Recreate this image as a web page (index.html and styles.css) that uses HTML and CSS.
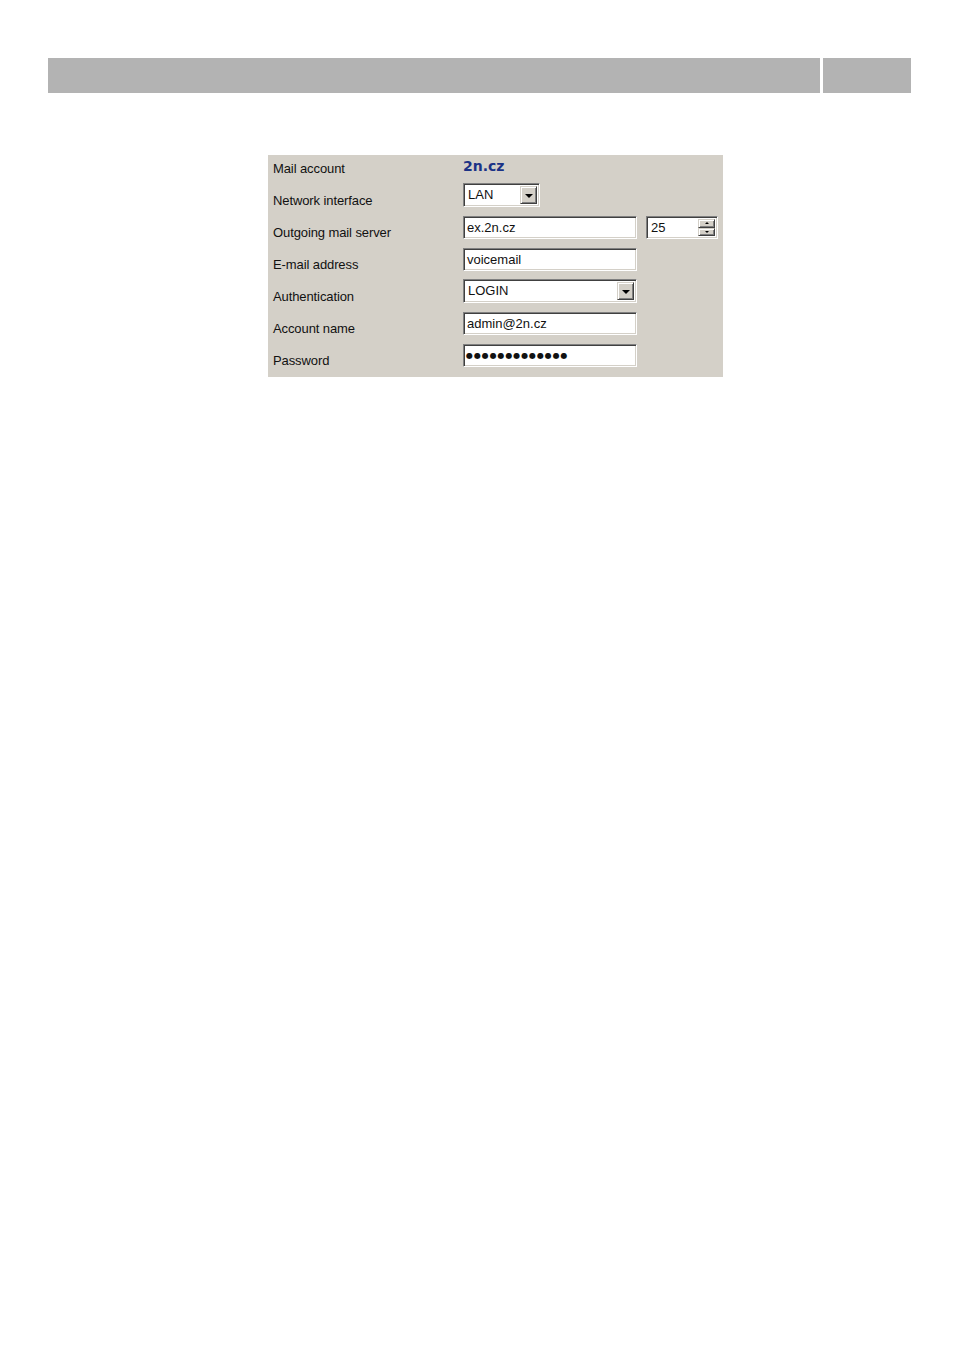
FILE: index.html
```html
<!DOCTYPE html>
<html>
<head>
<meta charset="utf-8">
<link rel="stylesheet" href="styles.css">
</head>
<body>
<div class="header">
  <div class="bar bar-main"></div>
  <div class="bar bar-side"></div>
</div>

<div class="panel">
  <div class="row row-first">
    <div class="label">Mail account</div>
    <div class="account">2n.cz</div>
  </div>
  <div class="row">
    <div class="label">Network interface</div>
    <div class="select select-short"><span class="val">LAN</span><span class="drop"><span class="tri"></span></span></div>
  </div>
  <div class="row">
    <div class="label">Outgoing mail server</div>
    <div class="field">ex.2n.cz</div>
    <div class="spin"><span class="val">25</span><span class="spinbtns"><span class="sbtn"><span class="tri-up"></span></span><span class="sbtn"><span class="tri-down"></span></span></span></div>
  </div>
  <div class="row">
    <div class="label">E-mail address</div>
    <div class="field">voicemail</div>
  </div>
  <div class="row">
    <div class="label">Authentication</div>
    <div class="select select-long"><span class="val">LOGIN</span><span class="drop"><span class="tri"></span></span></div>
  </div>
  <div class="row">
    <div class="label">Account name</div>
    <div class="field">admin@2n.cz</div>
  </div>
  <div class="row">
    <div class="label">Password</div>
    <div class="field pwd">●●●●●●●●●●●●●</div>
  </div>
</div>
</body>
</html>
```

FILE: styles.css
```css
html, body {
  margin: 0;
  padding: 0;
  background: #ffffff;
}

body {
  font-family: "Liberation Sans", Arial, sans-serif;
  color: #111111;
}

.header {
  display: flex;
  gap: 3px;
  padding-left: 48px;
  margin-top: 58px;
}

.bar {
  height: 35px;
  background: #b3b3b3;
}

.bar-main { width: 772px; }
.bar-side { width: 88px; }

.panel {
  margin-top: 62px;
  margin-left: 268px;
  width: 455px;
  height: 222px;
  box-sizing: border-box;
  background: #d4d0c8;
  padding-left: 5px;
}

.row {
  display: flex;
  align-items: flex-start;
  height: 32px;
}

.row-first {
  height: 29px;
}

.label {
  width: 190px;
  flex: none;
  font-size: 13px;
  line-height: 16px;
  padding-top: 9px;
  letter-spacing: -0.1px;
}

.row-first .label {
  padding-top: 6px;
}

.account {
  font-family: "DejaVu Sans", Verdana, sans-serif;
  font-size: 14px;
  font-weight: bold;
  color: #1b3286;
  line-height: 18px;
  padding-top: 2px;
}

.field, .select, .spin {
  box-sizing: border-box;
  height: 23px;
  background: #ffffff;
  border: 1px solid;
  border-color: #808080 #ffffff #ffffff #808080;
  box-shadow: inset 1px 1px 0 #404040, inset -1px -1px 0 #d4d0c8;
  font-size: 13px;
  line-height: 19px;
  padding: 1px 3px 0 3px;
  white-space: nowrap;
  overflow: hidden;
}

.field {
  width: 174px;
}

.pwd {
  font-family: "DejaVu Sans", sans-serif;
  font-size: 8px;
  letter-spacing: 0.9px;
  line-height: 20px;
  padding-left: 2px;
}

.select {
  display: flex;
  align-items: center;
  height: 24px;
  padding: 2px 2px 2px 4px;
}

.select .val {
  flex: 1;
  line-height: 18px;
}

.select-short { width: 77px; margin-top: -1px; }
.select-long { width: 174px; margin-top: -1px; }

.drop {
  box-sizing: border-box;
  width: 17px;
  height: 18px;
  flex: none;
  background: #d4d0c8;
  border: 1px solid;
  border-color: #d4d0c8 #404040 #404040 #d4d0c8;
  box-shadow: inset 1px 1px 0 #ffffff, inset -1px -1px 0 #808080;
  display: flex;
  align-items: center;
  justify-content: center;
}

.tri {
  width: 0;
  height: 0;
  border-left: 4px solid transparent;
  border-right: 4px solid transparent;
  border-top: 4px solid #000000;
  margin-top: 1px;
}

.spin {
  width: 72px;
  margin-left: 9px;
  display: flex;
  align-items: stretch;
  padding: 2px 2px 2px 4px;
}

.spin .val {
  flex: 1;
  line-height: 18px;
}

.spinbtns {
  display: flex;
  flex-direction: column;
  width: 17px;
  flex: none;
}

.sbtn {
  flex: 1;
  box-sizing: border-box;
  background: #d4d0c8;
  border: 1px solid;
  border-color: #d4d0c8 #404040 #404040 #d4d0c8;
  box-shadow: inset 1px 1px 0 #ffffff, inset -1px -1px 0 #808080;
  display: flex;
  align-items: center;
  justify-content: center;
}

.tri-up {
  width: 0;
  height: 0;
  border-left: 2px solid transparent;
  border-right: 2px solid transparent;
  border-bottom: 2px solid #000000;
}

.tri-down {
  width: 0;
  height: 0;
  border-left: 2px solid transparent;
  border-right: 2px solid transparent;
  border-top: 2px solid #000000;
}
```
